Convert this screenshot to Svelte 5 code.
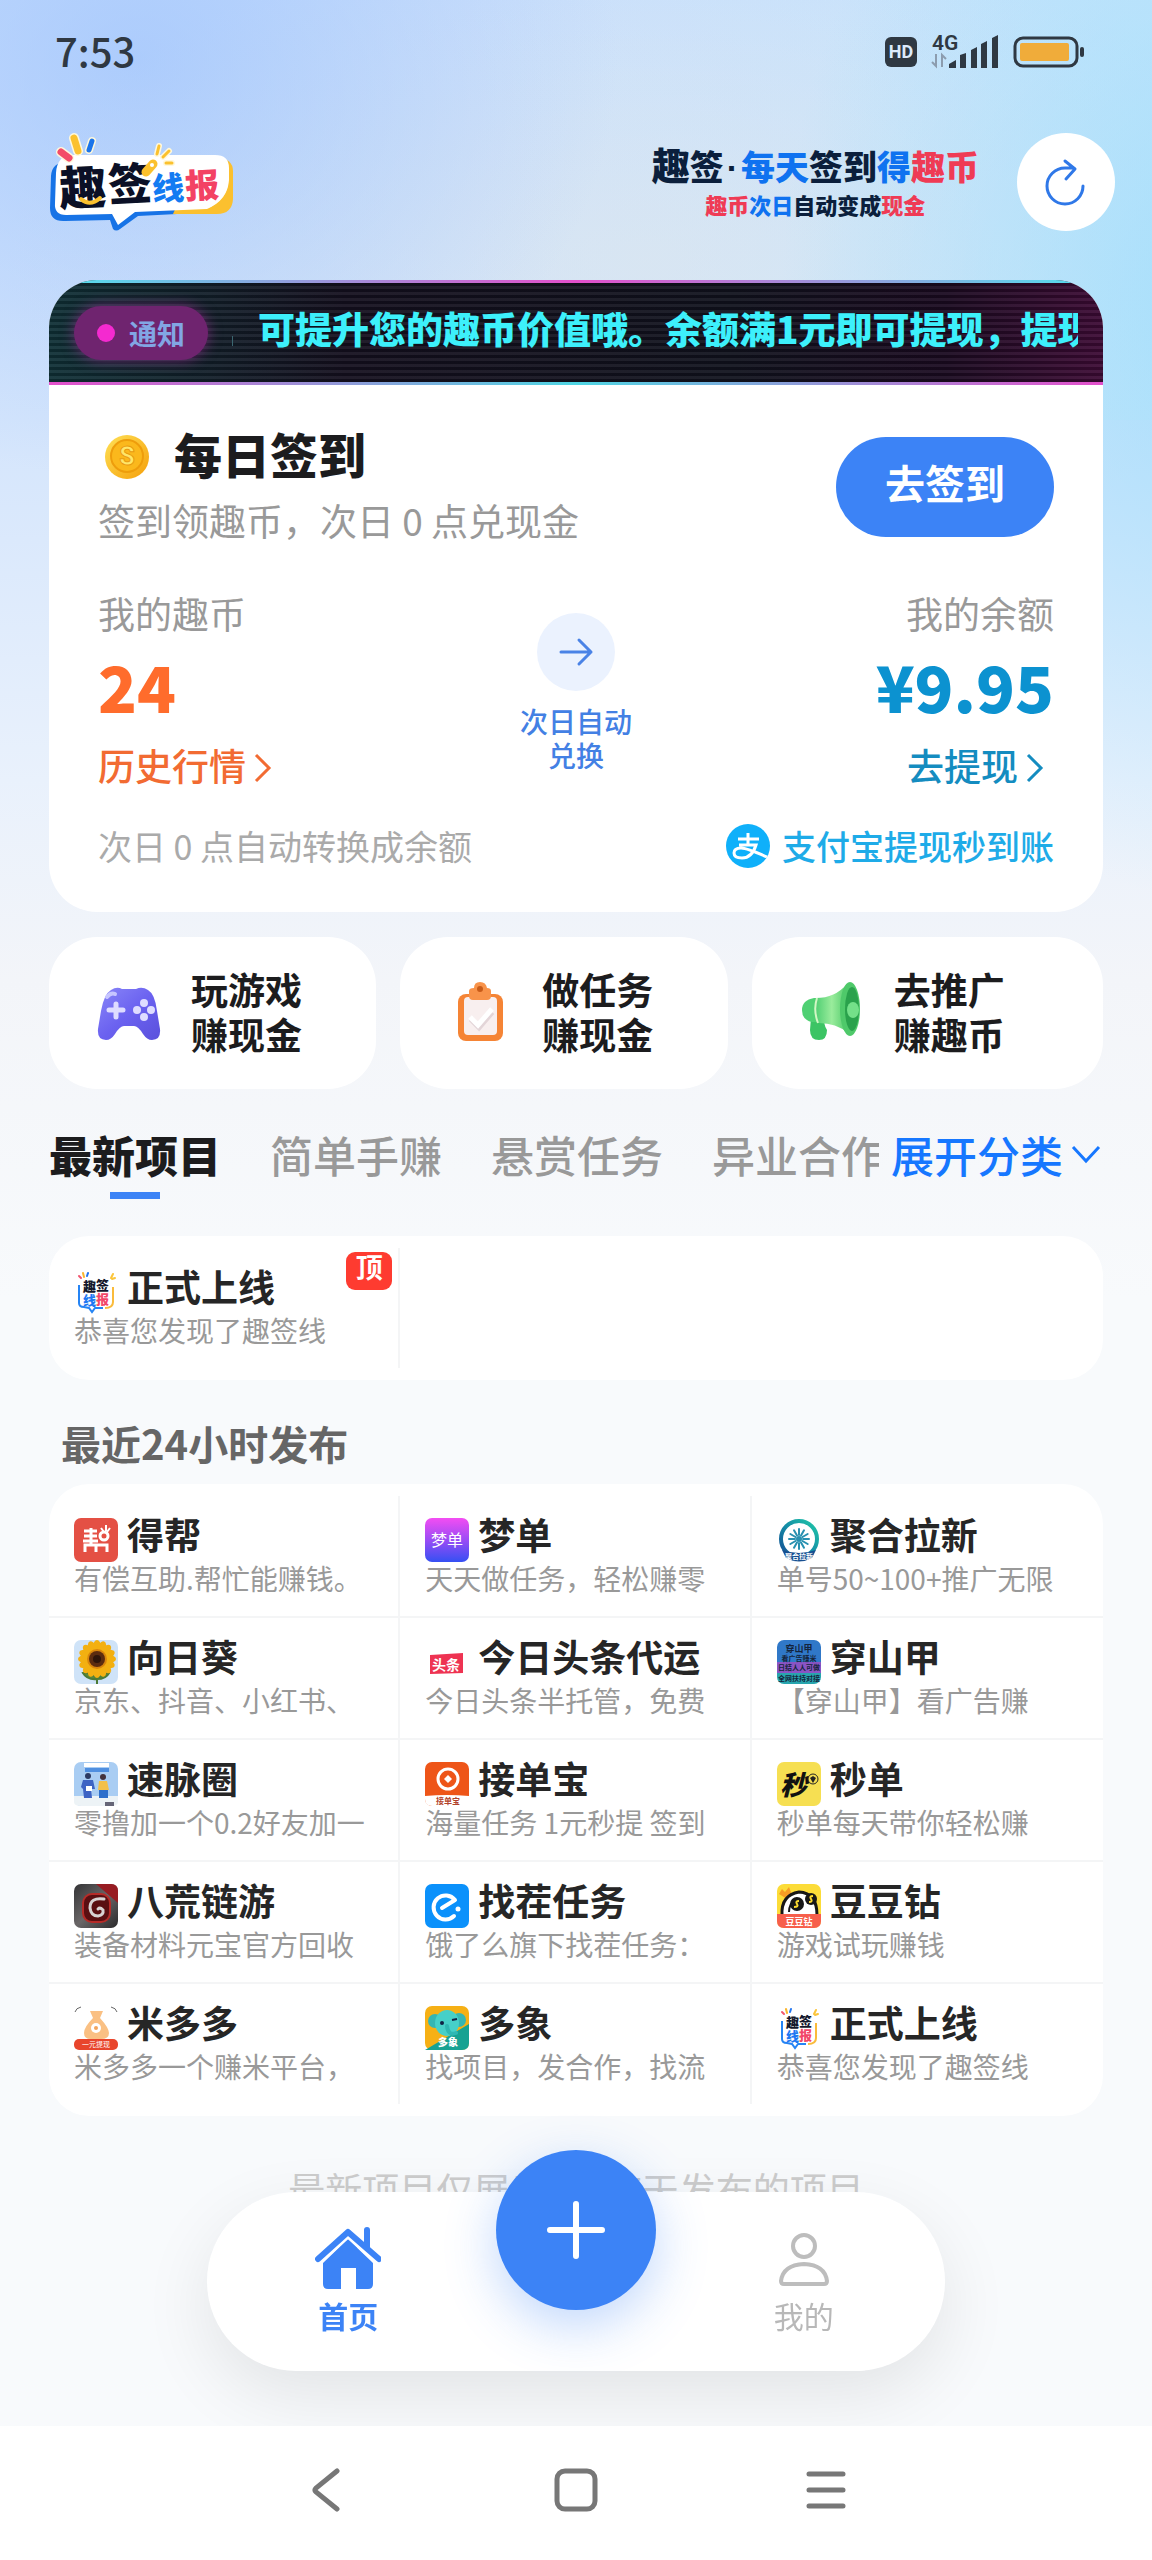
<script lang="ts">
  type Project = { icon: string; name: string; desc: string };

  const quick = [
    { icon: 'game', lines: ['玩游戏', '赚现金'] },
    { icon: 'task', lines: ['做任务', '赚现金'] },
    { icon: 'promo', lines: ['去推广', '赚趣币'] },
  ];

  const tabs = ['最新项目', '简单手赚', '悬赏任务', '异业合作'];
  let activeTab = $state(0);

  const projects: Project[] = [
    { icon: 'debang', name: '得帮', desc: '有偿互助.帮忙能赚钱。' },
    { icon: 'mengdan', name: '梦单', desc: '天天做任务，轻松赚零' },
    { icon: 'juhe', name: '聚合拉新', desc: '单号50~100+推广无限' },
    { icon: 'sunflower', name: '向日葵', desc: '京东、抖音、小红书、' },
    { icon: 'toutiao', name: '今日头条代运', desc: '今日头条半托管，免费' },
    { icon: 'chuanshan', name: '穿山甲', desc: '【穿山甲】看广告赚' },
    { icon: 'sumai', name: '速脉圈', desc: '零撸加一个0.2好友加一' },
    { icon: 'jiedan', name: '接单宝', desc: '海量任务 1元秒提 签到' },
    { icon: 'miaodan', name: '秒单', desc: '秒单每天带你轻松赚' },
    { icon: 'bahuang', name: '八荒链游', desc: '装备材料元宝官方回收' },
    { icon: 'zhaocha', name: '找茬任务', desc: '饿了么旗下找茬任务：' },
    { icon: 'doudou', name: '豆豆钻', desc: '游戏试玩赚钱' },
    { icon: 'miduo', name: '米多多', desc: '米多多一个赚米平台，' },
    { icon: 'duoxiang', name: '多象', desc: '找项目，发合作，找流' },
    { icon: 'quqian', name: '正式上线', desc: '恭喜您发现了趣签线' },
  ];

  const petals = Array.from({ length: 16 }, (_, i) => i * 22.5);
  const spokes = Array.from({ length: 12 }, (_, i) => i * 30);
</script>

{#snippet appIcon(kind: string)}
  <svg class="app-icon" viewBox="0 0 44 44" aria-hidden="true">
    {#if kind === 'debang'}
      <rect width="44" height="44" rx="7" fill="#e45044" />
      <g fill="none" stroke="#fff" stroke-width="3">
        <path d="M10 13h13M10 18h13M9 23h15M17 10v16M11 34v-7h22v7M22 27v7" />
        <circle cx="30" cy="18" r="4" />
        <path d="M27 10l3 4M32 7v6M36 10l-3 4" stroke-width="2" />
      </g>
    {:else if kind === 'mengdan'}
      <defs>
        <linearGradient id="md" x2="0" y2="1"><stop stop-color="#f34df2" /><stop offset=".5" stop-color="#9a4cf5" /><stop offset="1" stop-color="#3550f3" /></linearGradient>
      </defs>
      <rect width="44" height="44" rx="7" fill="url(#md)" />
      <text x="22" y="28" text-anchor="middle" font-size="16" fill="#fff">梦单</text>
    {:else if kind === 'juhe'}
      <defs>
        <linearGradient id="jh" x1="1" x2="0" y2="1"><stop stop-color="#20c8a8" /><stop offset=".5" stop-color="#148da6" /><stop offset="1" stop-color="#164c93" /></linearGradient>
      </defs>
      <circle cx="22" cy="21" r="18" fill="#fff" stroke="url(#jh)" stroke-width="4" />
      <g stroke="#2790b0" stroke-width="2" stroke-linecap="round">
        {#each spokes as a}<path d="M22 17V11" transform="rotate({a} 22 21)" />{/each}
      </g>
      <circle cx="22" cy="21" r="3" fill="#2790b0" />
      <path d="M5 32q17 6 34 0l-4 8q-13 7-26 0z" fill="#174f91" />
      <text x="22" y="41" text-anchor="middle" font-size="7" font-weight="700" fill="#fff">聚合拉新</text>
    {:else if kind === 'sunflower'}
      <rect width="44" height="44" rx="7" fill="#cfe3f8" />
      <path d="M23 28v16M23 38q-8-6-14-5 4 7 14 6q8-7 12-6-3 6-12 6" fill="#5b8a3c" stroke="#4c7a35" stroke-width="2" />
      <g fill="#f3b011">
        {#each petals as a}<ellipse cx="23" cy="7" rx="4" ry="7" transform="rotate({a} 23 19)" />{/each}
      </g>
      <circle cx="23" cy="19" r="10" fill="#d9860c" />
      <circle cx="23" cy="19" r="8" fill="#5c2c10" />
      <circle cx="23" cy="19" r="4" fill="#2e150a" />
    {:else if kind === 'toutiao'}
      <path d="M5 15l33-2v20L5 34z" fill="#ee3352" />
      <text x="21" y="30" text-anchor="middle" font-size="14" font-weight="700" fill="#fff">头条</text>
    {:else if kind === 'chuanshan'}
      <defs><clipPath id="cs"><rect width="44" height="44" rx="7" /></clipPath></defs>
      <g clip-path="url(#cs)">
        <rect width="44" height="22" fill="#3078c8" />
        <rect y="22" width="44" height="11" fill="#8a54c4" />
        <rect y="33" width="44" height="11" fill="#27a5ae" />
      </g>
      <g text-anchor="middle" font-weight="700" fill="#14243c">
        <text x="22" y="12" font-size="9">穿山甲</text>
        <text x="22" y="21" font-size="7">看广告赚米</text>
        <text x="22" y="30" font-size="7">日结人人可做</text>
        <text x="22" y="41" font-size="7">全网扶持对接</text>
      </g>
    {:else if kind === 'sumai'}
      <rect width="44" height="44" rx="7" fill="#a9cdf3" />
      <path d="M0 34h44v6q0 4-7 4H7q-7 0-7-4z" fill="#edf3f6" />
      <rect x="10" y="1" width="25" height="4" fill="#fff" />
      <rect x="11" y="6" width="24" height="4" fill="#4f8fe0" />
      <circle cx="14" cy="14" r="3" fill="#2c3a62" />
      <path d="M9 18h10l2 9h-4l1 9h-8l-1-9-2-2z" fill="#3d63c4" />
      <path d="M12 24h6v5h-6z" fill="#fff" />
      <circle cx="29" cy="15" r="3" fill="#43323c" />
      <path d="M25 19h8l2 9h-11z" fill="#f3c04a" />
      <path d="M25 28h9v8h-9z" fill="#2d6fcb" />
      <path d="M31 40h9v4h-9z" fill="#667" />
    {:else if kind === 'jiedan'}
      <rect width="44" height="44" rx="7" fill="#ee5518" />
      <path d="M0 34q22-2 44 0v10H7q-7 0-7-7z" fill="#fff" />
      <circle cx="23" cy="17" r="10" fill="none" stroke="#fff" stroke-width="3" />
      <path d="M23 13l4 4-4 4-4-4z" fill="#fff" />
      <text x="23" y="42" text-anchor="middle" font-size="8" font-weight="700" fill="#b2432c">接单宝</text>
    {:else if kind === 'miaodan'}
      <rect width="44" height="44" rx="7" fill="#f6df52" />
      <text x="3" y="33" font-size="27" font-weight="900" font-style="italic" fill="#111">秒</text>
      <circle cx="36" cy="17" r="5" fill="#f6df52" stroke="#222" stroke-width="1" />
      <path d="M36 14l3 2-3 5-3-5z" fill="#222" />
    {:else if kind === 'bahuang'}
      <defs>
        <linearGradient id="bh" x2="1" y2="1"><stop stop-color="#343436" /><stop offset=".5" stop-color="#6a6667" /><stop offset="1" stop-color="#2a2a2c" /></linearGradient>
      </defs>
      <rect width="44" height="44" rx="7" fill="url(#bh)" />
      <path d="M22 0h15q7 0 7 7v12z" fill="#971c22" />
      <rect x="9" y="10" width="27" height="28" rx="9" fill="#5a0f12" stroke="#b62b28" stroke-width="2" />
      <path d="M30 15q-14-2-14 9 1 8 8 8 6-1 5-6-3-3-5-1" fill="none" stroke="#d8d2d2" stroke-width="3" stroke-linecap="round" />
    {:else if kind === 'zhaocha'}
      <rect width="44" height="44" rx="7" fill="#0b91fb" />
      <path d="M17 24l13-8A12 12 0 1 0 29 32" fill="none" stroke="#fff" stroke-width="4" stroke-linecap="round" stroke-linejoin="round" />
      <circle cx="33" cy="25" r="2.5" fill="#fff" />
    {:else if kind === 'doudou'}
      <rect width="44" height="44" rx="7" fill="#fcdc38" />
      <path d="M2 10l3-5 3 3 4-5 3 8-5 4z" fill="#f79c24" />
      <path d="M5 31q-1-20 17-23 18 1 18 23" fill="#fff" stroke="#171717" stroke-width="3" />
      <path d="M12 28q0-9 8-14" fill="none" stroke="#171717" stroke-width="2" />
      <circle cx="20" cy="20" r="7" fill="#171717" /><circle cx="34" cy="15" r="6" fill="#171717" />
      <path d="M22 17q-4 0-2 3t-3 3M36 12q-4 0-2 3t-2 3" fill="none" stroke="#fbd92f" stroke-width="2" />
      <path d="M0 30h44v7q0 7-7 7H7q-7 0-7-7z" fill="#f75f4b" />
      <text x="22" y="41" text-anchor="middle" font-size="9" font-weight="700" fill="#fff">豆豆钻</text>
    {:else if kind === 'miduo'}
      <path d="M1 6q1-4 6-5M43 6q-1-4-6-5" fill="none" stroke="#666" stroke-width="1" />
      <path d="M16 5h13l-3 7q9 10 9 15 0 6-8 6H17q-7 0-7-6 0-6 9-15z" fill="#fac083" />
      <circle cx="22" cy="22" r="5" fill="#fff" /><circle cx="22" cy="22" r="2" fill="#f3a45c" />
      <rect y="33" width="44" height="11" rx="5" fill="#e8452c" />
      <text x="22" y="41" text-anchor="middle" font-size="7" fill="#fff">一元提现</text>
    {:else if kind === 'duoxiang'}
      <rect width="44" height="44" rx="7" fill="#f6b015" />
      <path d="M0 44L44 18v19q0 7-7 7z" fill="#17a292" />
      <circle cx="10" cy="15" r="7" fill="#35b6b2" /><circle cx="34" cy="14" r="7" fill="#35b6b2" />
      <ellipse cx="22" cy="17" rx="12" ry="13" fill="#46d0c8" />
      <path d="M22 20q1 10 9 7" fill="none" stroke="#2fb8b3" stroke-width="4" stroke-linecap="round" />
      <circle cx="17" cy="17" r="2" fill="#124" /><path d="M27 14l5-1" stroke="#124" stroke-width="2" />
      <text x="23" y="40" text-anchor="middle" font-size="10" font-weight="900" fill="#fff">多象</text>
    {:else}
      <g stroke-width="2" stroke-linecap="round">
        <path d="M5 6l2 2" stroke="#f2566f" /><path d="M9 3l1 4" stroke="#fbb62c" /><path d="M14 3l-1 3" stroke="#2174f0" />
        <path d="M37 8l2-4M38 9l3-1" stroke="#fbc53a" />
      </g>
      <path d="M9 11h26q4 0 4 4v22q-14 2-19 2l-3 4-3-4q-9 0-9-4V14q0-3 4-3z" fill="#fff" />
      <path d="M5 15v18q0 4 5 4l5 1 3 4 3-4h8" fill="none" stroke="#2584f4" stroke-width="2" />
      <path d="M39 17v15q0 6-8 6" fill="none" stroke="#fabb3b" stroke-width="2" />
      <g font-size="13" font-weight="900">
        <text x="9" y="21" fill="#14182c">趣</text><text x="22" y="20" fill="#14182c">签</text>
        <text x="9" y="35" fill="#1d78f2">线</text><text x="22" y="34" fill="#f24769">报</text>
      </g>
    {/if}
  </svg>
{/snippet}

{#snippet cell(p: Project, pinned: boolean)}
  <a class="cell" href="#project">
    <span class="cell-head">
      {@render appIcon(p.icon)}
      <strong>{p.name}</strong>
    </span>
    <span class="cell-desc">{p.desc}</span>
    {#if pinned}<span class="pin">顶</span>{/if}
  </a>
{/snippet}

<div class="page">
  <div class="status">
    <span class="time">7:53</span>
    <svg class="hd" viewBox="0 0 32 30" aria-label="HD"><rect width="32" height="30" rx="6" fill="#2f3842" /><text class="latin" x="16" y="21" text-anchor="middle" font-size="18" font-weight="700" fill="#dceafb">HD</text></svg>
    <svg class="signal" viewBox="0 0 70 36" aria-label="4G">
      <text class="latin" x="3" y="16" font-size="21" font-weight="600" fill="#2f3842">4G</text>
      <path d="M7 20v12l-4-4M13 33V21l4 4" fill="none" stroke="#8c9cae" stroke-width="2" />
      <g fill="#2f3842">
        <path d="M20 34v-4l7-4v8zM31 34V21l6-2v15zM42 34V16l6-3v21zM52 34V10l6-3v27zM63 34V4l6-3v33z" />
      </g>
    </svg>
    <svg class="battery" viewBox="0 0 72 32" aria-label="电量">
      <rect x="2" y="2" width="62" height="28" rx="8" fill="none" stroke="#2f3842" stroke-width="3" />
      <rect x="7" y="7" width="49" height="18" rx="2" fill="#f0ac3a" />
      <rect x="67" y="11" width="4" height="10" rx="2" fill="#2f3842" />
    </svg>
  </div>

  <header class="header">
    <svg class="logo" viewBox="0 0 186 100" role="img" aria-label="趣签线报">
      <path d="M18 30q-15 0-16 14l-1 32q0 14 15 13l45-1 3 9q3 3 7 0l18-13 78-4V30z" fill="#1773e6" />
      <path d="M150 25h18q16 2 16 14v28q-1 15-16 15h-44z" fill="#fbc02f" />
      <path d="M24 23h142q14 0 14 13v12q-1 20-22 29l-72 3-17 13-6-11-46 1q-12 0-11-12l1-30q1-18 17-18z" fill="#fff" />
      <g stroke-linecap="round" stroke="#fff8dc">
        <path d="M12 20l8 6" stroke-width="10" /><path d="M25 6l4 13" stroke-width="10" /><path d="M43 9l-3 9" stroke-width="8" />
        <path d="M110 14l-2 8M120 19l-6 6M123 31h-6" stroke-width="6" />
      </g>
      <g stroke-linecap="round">
        <path d="M12 20l8 6" stroke="#f34b68" stroke-width="7" />
        <path d="M25 6l4 13" stroke="#fbc12e" stroke-width="7" />
        <path d="M43 9l-3 9" stroke="#1a74ea" stroke-width="5" />
        <path d="M110 14l-2 8M120 19l-6 6M123 31h-6" stroke="#fbc12e" stroke-width="3" />
      </g>
      <g font-weight="900">
        <text x="10" y="73" font-size="47" fill="#0b1026" transform="rotate(-3 36 56)">趣</text>
        <text x="59" y="68" font-size="44" fill="#0b1026" transform="rotate(-3 81 52)">签</text>
        <text x="103" y="68" font-size="32" fill="#137bf2" transform="rotate(-3 118 54)">线</text>
        <text x="136" y="66" font-size="34" fill="#f34264" transform="rotate(-3 152 52)">报</text>
      </g>
      <path d="M32 67q9 8 19-1" fill="none" stroke="#fbc12e" stroke-width="4" stroke-linecap="round" />
      <path d="M97 40l7-8" stroke="#fbc12e" stroke-width="9" stroke-linecap="round" /><circle cx="103" cy="33" r="2" fill="#fff" />
      <path d="M161 76q17-8 19-25 3 24-19 25z" fill="#fbc02f" />
    </svg>
    <div class="slogan">
      <p class="slogan-main"><span class="big">趣</span>签<span class="dot">·</span><span class="blue">每天</span>签到<span class="blue">得</span><span class="red">趣币</span></p>
      <p class="slogan-sub"><span class="red">趣币</span><span class="blue">次日</span>自动变成<span class="red">现金</span></p>
    </div>
    <button class="refresh" aria-label="刷新">
      <svg viewBox="0 0 98 98"><path d="M66 53a18 18 0 1 1-18-18h9M48 28l10 8-9 10" fill="none" stroke="#2f78e8" stroke-width="3" stroke-linecap="round" stroke-linejoin="round" /></svg>
    </button>
  </header>

  <main>
    <section class="checkin">
      <div class="notice">
        <span class="notice-tag"><i></i>通知</span>
        <span class="notice-sep"></span>
        <p>可提升您的趣币价值哦。余额满1元即可提现，提现</p>
      </div>
      <div class="checkin-body">
        <div class="checkin-top">
          <div>
            <h1>
              <svg viewBox="0 0 56 52" aria-hidden="true">
                <defs><linearGradient id="coin" x2="1" y2="1"><stop stop-color="#ffe156" /><stop offset="1" stop-color="#f59f0a" /></linearGradient></defs>
                <circle cx="29" cy="30" r="22" fill="url(#coin)" />
                <circle cx="29" cy="29" r="16" fill="#fbb81c" stroke="#ee9d0c" stroke-width="2" />
                <text class="latin" x="29" y="38" text-anchor="middle" font-size="25" font-weight="800" fill="#ffe668" stroke="#e99a10" stroke-width="1">S</text>
              </svg>
              每日签到
            </h1>
            <p class="sub">签到领趣币，次日 0 点兑现金</p>
          </div>
          <button class="go">去签到</button>
        </div>
        <div class="assets">
          <div class="asset coins">
            <span class="label">我的趣币</span>
            <strong>24</strong>
            <a href="#history">历史行情<svg viewBox="0 0 18 30"><path d="M2 2l13 13L2 28" /></svg></a>
          </div>
          <div class="exchange">
            <svg viewBox="0 0 78 78" aria-hidden="true"><circle cx="39" cy="39" r="39" fill="#ebf2fe" /><path d="M24 39h30M42 27l12 12-12 12" fill="none" stroke="#4a83e6" stroke-width="3" stroke-linecap="round" stroke-linejoin="round" /></svg>
            <span>次日自动<br />兑换</span>
          </div>
          <div class="asset balance">
            <span class="label">我的余额</span>
            <strong>¥9.95</strong>
            <a href="#withdraw">去提现<svg viewBox="0 0 18 30"><path d="M2 2l13 13L2 28" /></svg></a>
          </div>
        </div>
        <div class="hints">
          <span>次日 0 点自动转换成余额</span>
          <span class="alipay">
            <svg viewBox="0 0 44 44" aria-hidden="true">
              <circle cx="22" cy="22" r="22" fill="#0fb0fa" />
              <g fill="none" stroke="#fff" stroke-width="3"><path d="M12 15h21M22 9v13M13 21h17q-4 13-14 13-8 0-8-5t7-5q6 0 26 9" /></g>
            </svg>
            支付宝提现秒到账
          </span>
        </div>
      </div>
    </section>

    <nav class="quick" aria-label="快捷入口">
      {#each quick as q}
        <a href="#{q.icon}">
          <svg viewBox="0 0 80 80" aria-hidden="true">
            {#if q.icon === 'game'}
              <defs><linearGradient id="pad" x2="1" y2="1"><stop stop-color="#8a87f8" /><stop offset=".5" stop-color="#6b62f0" /><stop offset="1" stop-color="#5a50dc" /></linearGradient></defs>
              <path d="M22 18q6-4 11-1h14q6-3 12 1 7 4 9 21l3 18q1 11-8 11-5 0-9-6-5-8-9-8H35q-4 0-9 8-4 6-9 6-9 0-8-11l3-18q3-17 10-21z" fill="url(#pad)" />
              <path d="M18 25q4-5 8-3" fill="none" stroke="#c7c6ff" stroke-width="4" stroke-linecap="round" />
              <path d="M27 32v13M20 38h14" stroke="#dedcff" stroke-width="5" stroke-linecap="round" />
              <g fill="#dedcff"><circle cx="55" cy="31" r="4" /><circle cx="55" cy="45" r="4" /><circle cx="48" cy="38" r="4" /><circle cx="62" cy="38" r="4" /></g>
            {:else if q.icon === 'task'}
              <rect x="18" y="22" width="45" height="47" rx="8" fill="#f58435" />
              <rect x="24" y="25" width="33" height="38" rx="4" fill="#f8efef" />
              <path d="M29 24v-5q0-3 5-3 0-6 6-6 6 0 7 6 4 0 4 3v5q0 4-4 4H33q-4 0-4-4z" fill="#f8934a" />
              <circle cx="40" cy="17" r="3" fill="#c85b18" />
              <path d="M31 47l8 8 13-15" fill="none" stroke="#e3d5d8" stroke-width="6" />
              <path d="M30 45l8 8 14-16" fill="none" stroke="#fff" stroke-width="5" />
            {:else}
              <defs><linearGradient id="horn" x1="0" x2="1"><stop stop-color="#4fce72" /><stop offset=".5" stop-color="#9aec9c" /><stop offset="1" stop-color="#4cc968" /></linearGradient></defs>
              <path d="M19 46h14q-2 6 2 12 0 10-8 10-9 0-9-10z" fill="#3cc464" />
              <path d="M22 26h8v24H20q-10-2-10-12 0-10 12-12z" fill="#4fd073" />
              <path d="M24 26q19 0 31-14l1 49q-12-10-29-10-5-14-3-25z" fill="url(#horn)" />
              <path d="M25 26q-4 12 1 25" fill="none" stroke="#d3f7c5" stroke-width="2" />
              <ellipse cx="58" cy="37" rx="10" ry="27" fill="#4fc96a" />
              <ellipse cx="60" cy="37" rx="7" ry="22" fill="#2aa24c" />
              <ellipse cx="61" cy="38" rx="6" ry="8" fill="#74e089" />
            {/if}
          </svg>
          <span>{q.lines[0]}<br />{q.lines[1]}</span>
        </a>
      {/each}
    </nav>

    <div class="tabs">
      <div class="tab-list" role="tablist">
        {#each tabs as t, i}
          <button role="tab" aria-selected={activeTab === i} class:active={activeTab === i} onclick={() => (activeTab = i)}>{t}</button>
        {/each}
      </div>
      <button class="expand">展开分类<svg viewBox="0 0 30 20"><path d="M2 3l13 14L28 3" /></svg></button>
    </div>

    <section class="grid">
      {@render cell({ icon: 'quqian', name: '正式上线', desc: '恭喜您发现了趣签线' }, true)}
    </section>

    <h2>最近24小时发布</h2>

    <section class="grid">
      {#each projects as p}
        {@render cell(p, false)}
      {/each}
    </section>

    <p class="end">最新项目仅展示最近7天发布的项目</p>
  </main>

  <nav class="tabbar" aria-label="主导航">
    <a class="on" href="#home">
      <svg viewBox="0 0 66 66" aria-hidden="true">
        <path d="M8 37l25-24 25 24v21q0 5-5 5H41V42H26v21H13q-5 0-5-5z" fill="#3c83f6" />
        <path d="M2 33L33 5l31 28" fill="none" stroke="#fff" stroke-width="12" />
        <path d="M3 33L33 6l31 27M52 4v18" fill="none" stroke="#3c83f6" stroke-width="6" stroke-linecap="round" stroke-linejoin="round" />
      </svg>
      首页
    </a>
    <button class="fab" aria-label="发布">
      <svg viewBox="0 0 60 60"><path d="M30 4v52M4 30h52" stroke="#fff" stroke-width="6" stroke-linecap="round" /></svg>
    </button>
    <a href="#me">
      <svg viewBox="0 0 66 66" aria-hidden="true">
        <g fill="none" stroke="#bdbdbd" stroke-width="4"><circle cx="33" cy="20" r="11" /><path d="M10 55q2-16 23-17 21 1 23 17 0 3-3 3H13q-3 0-3-3z" /></g>
      </svg>
      我的
    </a>
  </nav>

  <div class="system">
    <button aria-label="返回"><svg viewBox="0 0 44 44"><path d="M33 3L12 20q-2 2 0 4l21 17" /></svg></button>
    <button aria-label="主屏幕"><svg viewBox="0 0 44 44"><rect x="3" y="3" width="38" height="38" rx="8" /></svg></button>
    <button aria-label="最近任务"><svg viewBox="0 0 44 44"><path d="M5 6h34M5 22h34M5 38h34" /></svg></button>
  </div>
</div>

<style>
  :global(body) {
    margin: 0;
    font-family: 'Noto Sans CJK SC', 'Noto Sans', sans-serif;
    color: #1c1c1e;
  }
  p, h1, h2 { margin: 0; }
  a { color: inherit; text-decoration: none; }
  button { border: 0; padding: 0; background: none; font: inherit; color: inherit; cursor: pointer; }
  svg { display: block; flex: none; }
  .latin { font-family: 'Roboto', sans-serif; }

  .page {
    min-height: 100vh;
    display: flex;
    flex-direction: column;
    background:
      radial-gradient(ellipse 480px 420px at 12% 60px, rgba(160, 196, 252, 0.7), transparent),
      radial-gradient(ellipse 440px 600px at 106% 300px, rgba(160, 222, 252, 0.85), transparent),
      radial-gradient(ellipse 640px 340px at 56% 260px, rgba(220, 230, 238, 0.7), transparent),
      linear-gradient(90deg, transparent 40%, rgba(200, 234, 250, 0.6)) top / 100% 420px no-repeat,
      linear-gradient(180deg, #c8defd 0, #d4e5fc 420px, #e9f1fc 780px, #f3f5f9 980px, #f8fafc 1300px);
  }

  .status {
    height: 104px;
    box-sizing: border-box;
    padding: 0 67px 0 55px;
    display: flex;
    align-items: center;
  }
  .time { flex: 1; font-size: 40px; line-height: 44px; padding-bottom: 4px; font-weight: 500; color: #2f3842; }
  .hd { width: 32px; height: 30px; }
  .signal { width: 70px; height: 36px; margin: 0 14px 0 12px; }
  .battery { width: 72px; height: 32px; }

  .header {
    display: flex;
    align-items: center;
    padding: 29px 37px 49px 49px;
  }
  .logo { width: 186px; height: 100px; margin: -1px auto -1px 0; }
  .slogan { text-align: center; font-weight: 900; color: #0b1f3c; margin-right: 38px; }
  .slogan-main { font-size: 34px; line-height: 40px; }
  .slogan-main .big { font-size: 38px; }
  .dot { font-family: 'Liberation Sans', sans-serif; padding: 0 3px; }
  .slogan-sub { font-size: 22px; line-height: 32px; }
  .blue { color: #0f72f0; }
  .red { color: #ef3b55; }
  .refresh { width: 98px; height: 98px; border-radius: 50%; background: #fff; }

  main { padding: 0 49px; }

  .checkin { background: #fff; border-radius: 48px; overflow: hidden; }
  .notice {
    height: 105px;
    display: flex;
    align-items: center;
    padding: 0 25px;
    background:
      linear-gradient(90deg, #4fe3ee, #e34fcb 50%, #4fe3ee) top / 100% 3px no-repeat,
      linear-gradient(90deg, #e34fcb, #4fd5e3 50%, #e34fcb) bottom / 100% 3px no-repeat,
      repeating-linear-gradient(180deg, rgba(255, 255, 255, 0.06) 0 3px, rgba(0, 0, 0, 0.15) 3px 6px),
      linear-gradient(90deg, #0f3036, #140f1e 28%, #10121d 65%, #1a0a20 85%, #3c0a34 100%);
    box-sizing: border-box;
  }
  .notice-tag {
    flex: none;
    width: 134px;
    height: 54px;
    border-radius: 27px;
    display: flex;
    align-items: center;
    justify-content: center;
    gap: 14px;
    font-size: 28px;
    line-height: 32px;
    font-weight: 700;
    color: #82a6e4;
    background: #6f246f;
    box-shadow: 0 0 14px rgba(190, 40, 170, 0.5);
  }
  .notice-tag i { width: 18px; height: 18px; border-radius: 50%; background: #f42ad0; }
  .notice-sep { flex: none; width: 1px; height: 10px; margin: 16px 25px 0 24px; background: #3b6670; }
  .notice p {
    flex: 1;
    min-width: 0;
    overflow: hidden;
    white-space: nowrap;
    font-size: 37px;
    line-height: 54px;
    font-weight: 900;
    color: #3df0fb;
    padding-bottom: 10px;
  }

  .checkin-body { padding: 38px 49px 44px; }
  .checkin-top { display: flex; justify-content: space-between; align-items: center; }
  h1 {
    display: flex;
    align-items: center;
    gap: 20px;
    font-size: 48px;
    line-height: 60px;
    font-weight: 900;
  }
  h1 svg { width: 56px; height: 52px; }
  .sub { font-size: 37px; line-height: 44px; color: #999; padding: 15px 0 8px; }
  .go {
    width: 218px;
    height: 100px;
    border-radius: 50px;
    background: #3c83f6;
    color: #fff;
    font-size: 40px;
    line-height: 48px;
    font-weight: 700;
    padding-bottom: 10px;
  }
  .assets { display: grid; grid-template-columns: 1fr auto 1fr; margin-top: 41px; }
  .asset { display: flex; flex-direction: column; align-items: flex-start; font-size: 37px; line-height: 44px; }
  .balance { align-items: flex-end; }
  .label { color: #999; }
  .asset strong { font-size: 64px; line-height: 72px; font-weight: 900; margin: 14px 0 22px; }
  .asset a { display: flex; align-items: center; font-weight: 500; }
  .asset a svg { width: 18px; height: 30px; margin: 6px 10px 0 8px; fill: none; stroke: currentColor; stroke-width: 3; }
  .coins strong { color: #ff6c2c; }
  .coins a { color: #f26b32; }
  .balance strong { color: #0c92d0; }
  .balance a { color: #148cc0; }
  .exchange {
    display: flex;
    flex-direction: column;
    align-items: center;
    gap: 13px;
    padding-top: 22px;
    font-size: 28px;
    line-height: 34px;
    font-weight: 500;
    text-align: center;
    color: #4380e4;
  }
  .exchange svg { width: 78px; height: 78px; }
  .hints {
    display: flex;
    justify-content: space-between;
    align-items: center;
    margin-top: 37px;
    font-size: 34px;
    line-height: 44px;
    color: #aaa;
  }
  .alipay { display: flex; align-items: center; gap: 12px; color: #1eabe8; font-weight: 500; }
  .alipay svg { width: 44px; height: 44px; }

  .quick { display: grid; grid-template-columns: repeat(3, 1fr); margin-top: 25px; }
  .quick a {
    display: flex;
    align-items: center;
    gap: 22px;
    height: 152px;
    box-sizing: border-box;
    padding: 0 0 2px 40px;
    border-radius: 48px;
    background: #fff;
    font-size: 37px;
    line-height: 45px;
    font-weight: 700;
  }
  .quick a:not(:last-child) { margin-right: 24px; }
  .quick svg { width: 80px; height: 80px; }

  .tabs { display: flex; margin: 35px 0 37px; font-size: 43px; line-height: 60px; }
  .tab-list { flex: 1; min-width: 0; display: flex; gap: 49px; overflow: hidden; margin-right: 12px; }
  .tab-list button { flex: none; color: #999; font-weight: 500; height: 75px; padding-bottom: 15px; }
  .tab-list .active {
    color: #1c1c1e;
    font-weight: 900;
    background: linear-gradient(#3c83f6, #3c83f6) center bottom / 50px 7px no-repeat;
  }
  .expand { height: 60px; display: flex; align-items: center; gap: 8px; color: #1677ff; font-weight: 500; padding-right: 2px; }
  .expand svg { width: 30px; height: 20px; fill: none; stroke: currentColor; stroke-width: 3; }

  .grid {
    display: grid;
    grid-template-columns: repeat(3, 1fr);
    padding: 12px 0;
    border-radius: 40px;
    background: #fff;
  }
  .cell {
    position: relative;
    min-width: 0;
    height: 122px;
    box-sizing: border-box;
    padding: 22px 0 0 25px;
    border-right: 2px solid #f4f5f6;
    border-bottom: 2px solid #f4f5f6;
  }
  .cell:nth-child(3n) { border-right: 0; }
  .cell:nth-last-child(-n + 3):nth-child(3n + 1),
  .cell:nth-last-child(-n + 3):nth-child(3n + 1) ~ .cell { border-bottom: 0; height: 120px; }
  .cell-head { display: flex; gap: 9px; height: 44px; }
  .app-icon { width: 44px; height: 44px; }
  .cell strong { font-size: 37px; line-height: 32px; font-weight: 700; white-space: nowrap; color: #262626; }
  .cell-desc { display: block; font-size: 28px; line-height: 32px; color: #999; white-space: nowrap; }
  .pin {
    position: absolute;
    top: 4px;
    right: 6px;
    width: 46px;
    height: 38px;
    border-radius: 9px;
    background: #fe3b30;
    color: #fff;
    font-size: 27px;
    line-height: 30px;
    font-weight: 700;
    text-align: center;
  }

  h2 { margin: 39px 12px 17px; font-size: 40px; line-height: 48px; font-weight: 700; color: #666; }
  .end { margin: 51px 0 0; font-size: 37px; line-height: 44px; text-align: center; color: #ccc; }

  .tabbar {
    position: fixed;
    left: 18%;
    right: 18%;
    bottom: 189px;
    height: 179px;
    box-sizing: border-box;
    display: flex;
    justify-content: space-between;
    padding: 34px 81px 0;
    border-radius: 90px;
    background: #fff;
    box-shadow: 0 24px 70px rgba(0, 0, 0, 0.09);
  }
  .tabbar a {
    width: 120px;
    display: flex;
    flex-direction: column;
    align-items: center;
    gap: 5px;
    font-size: 30px;
    line-height: 36px;
    color: #b8b8b8;
  }
  .tabbar a svg { width: 66px; height: 66px; }
  .tabbar .on { color: #3c83f6; font-weight: 700; }
  .fab {
    position: absolute;
    top: -42px;
    left: 50%;
    width: 160px;
    height: 160px;
    margin-left: -80px;
    border-radius: 50%;
    background: #3c83f6;
    box-shadow: 0 16px 52px rgba(60, 131, 246, 0.32);
    display: flex;
    align-items: center;
    justify-content: center;
  }
  .fab svg { width: 60px; height: 60px; }

  .system {
    position: relative;
    margin-top: auto;
    height: 134px;
    box-sizing: border-box;
    padding: 0 26% 6px;
    display: flex;
    justify-content: space-between;
    align-items: center;
    background: #fff;
  }
  .system button { padding: 0 4px; }
  .system svg { width: 44px; height: 44px; fill: none; stroke: #777; stroke-width: 5; stroke-linecap: round; }
</style>
